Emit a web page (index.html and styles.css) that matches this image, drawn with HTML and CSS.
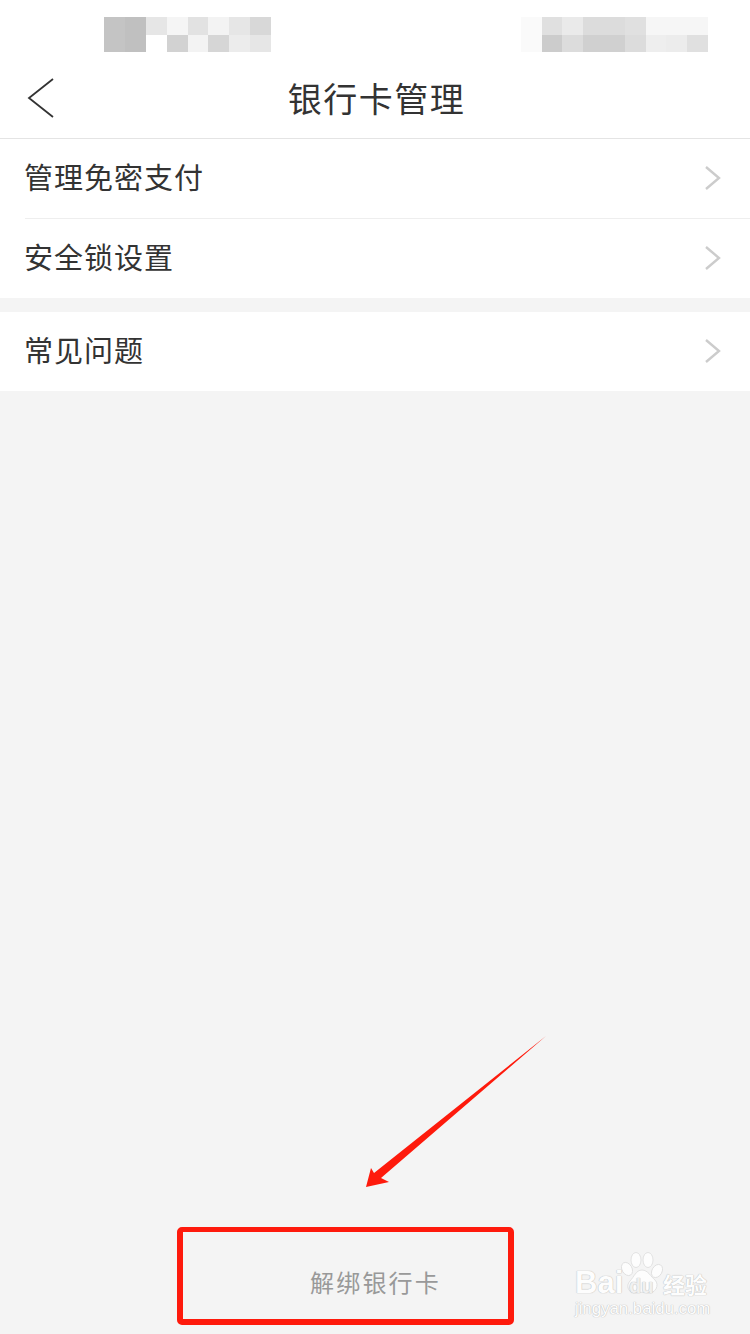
FILE: index.html
```html
<!DOCTYPE html>
<html lang="zh-CN">
<head>
    <meta charset="UTF-8">
    <meta name="viewport" content="width=device-width, initial-scale=1.0">
    <title>银行卡管理</title>
    <link rel="stylesheet" href="styles.css">
</head>
<body>
    <div class="page">
        <div class="status-bar">
            <div class="mosaic mosaic-left">
                <i class="c4"></i><i class="c0"></i><i class="e6"></i><i class="f5"></i><i class="e2"></i><i class="f3"></i><i class="e6"></i><i class="d8"></i>
                <i class="c4"></i><i class="c0"></i><i class="ff"></i><i class="d2"></i><i class="f3"></i><i class="d6"></i><i class="ec"></i><i class="e6"></i>
            </div>
            <div class="mosaic mosaic-right">
                <i class="fa"></i><i class="e0"></i><i class="ea"></i><i class="dc"></i><i class="dc"></i><i class="e0"></i><i class="f6"></i><i class="f6"></i><i class="f6"></i>
                <i class="fa"></i><i class="cc"></i><i class="dc"></i><i class="d0"></i><i class="d0"></i><i class="dc"></i><i class="ee"></i><i class="ec"></i><i class="e0"></i>
            </div>
        </div>

        <div class="nav-bar">
            <svg class="back" width="30" height="42" viewBox="0 0 30 42"><path d="M27 2 L3 21 L27 40" fill="none" stroke="#333" stroke-width="1.8"/></svg>
            <h1 class="nav-title">银行卡管理</h1>
        </div>

        <div class="group">
            <div class="row row-line">
                <span class="row-label">管理免密支付</span>
                <svg class="arrow" width="18" height="26" viewBox="0 0 18 26"><path d="M2 2 L15 13 L2 24" fill="none" stroke="#ccc" stroke-width="2.4"/></svg>
            </div>
            <div class="row">
                <span class="row-label">安全锁设置</span>
                <svg class="arrow" width="18" height="26" viewBox="0 0 18 26"><path d="M2 2 L15 13 L2 24" fill="none" stroke="#ccc" stroke-width="2.4"/></svg>
            </div>
        </div>

        <div class="group">
            <div class="row">
                <span class="row-label">常见问题</span>
                <svg class="arrow" width="18" height="26" viewBox="0 0 18 26"><path d="M2 2 L15 13 L2 24" fill="none" stroke="#ccc" stroke-width="2.4"/></svg>
            </div>
        </div>

        <div class="unbind">解绑银行卡</div>
    </div>

    <!-- annotations on top of the screenshot -->
    <svg class="pointer" width="190" height="160" viewBox="0 0 190 160">
        <path d="M186 0 L21 142 L29 146 L6 151 L11 132 L14 137 Z" fill="#fe1a0c"/>
    </svg>
    <div class="highlight"></div>

    <div class="watermark">
        <svg class="paw" width="44" height="44" viewBox="0 0 44 44">
            <g fill="#fdfdfd" stroke="#dcdcdc" stroke-width="0.8">
                <ellipse cx="7" cy="17" rx="5" ry="7" transform="rotate(-30 7 17)"/>
                <ellipse cx="16" cy="8" rx="5" ry="7.5"/>
                <ellipse cx="28" cy="8" rx="5" ry="7.5"/>
                <ellipse cx="37" cy="19" rx="5" ry="7" transform="rotate(30 37 19)"/>
                <path d="M22 18 C28 18 31 25 35 28 C40 33 35 42 28 41 C24 40 20 40 16 41 C9 42 5 34 10 29 C14 25 16 18 22 18 Z"/>
            </g>
        </svg>
        <span class="wm-bai">Bai</span>
        <span class="wm-du">du</span>
        <span class="wm-jy">经验</span>
        <span class="wm-url">jingyan.baidu.com</span>
    </div>
</body>
</html>
```

FILE: styles.css
```css
body {
    margin: 0;
    background-color: #f4f4f4;
    font-family: "Noto Sans CJK SC", "Liberation Sans", sans-serif;
    color: #333;
}

.page {
    display: flex;
    flex-direction: column;
    height: 1334px;
    overflow: hidden;
}

.status-bar {
    display: flex;
    justify-content: space-between;
    height: 69px;
    box-sizing: border-box;
    padding: 17px 42px 0 104px;
    background-color: #fff;
}

.mosaic {
    display: grid;
    grid-auto-rows: 17.5px;
    height: 35px;
}

.mosaic-left {
    grid-template-columns: repeat(8, 20.9px);
}

.mosaic-right {
    grid-template-columns: repeat(9, 20.8px);
}

.c0 { background-color: #c0c0c0; }
.c4 { background-color: #c4c4c4; }
.cc { background-color: #cccccc; }
.d0 { background-color: #d0d0d0; }
.d2 { background-color: #d2d2d2; }
.d6 { background-color: #d6d6d6; }
.d8 { background-color: #d8d8d8; }
.dc { background-color: #dcdcdc; }
.e0 { background-color: #e0e0e0; }
.e2 { background-color: #e2e2e2; }
.e6 { background-color: #e6e6e6; }
.ea { background-color: #eaeaea; }
.ec { background-color: #ececec; }
.ee { background-color: #eeeeee; }
.f3 { background-color: #f3f3f3; }
.f5 { background-color: #f5f5f5; }
.f6 { background-color: #f6f6f6; }
.fa { background-color: #fafafa; }
.ff { background-color: #ffffff; }

.nav-bar {
    display: flex;
    align-items: center;
    justify-content: center;
    height: 70px;
    box-sizing: border-box;
    padding-bottom: 12px;
    background-color: #fff;
    border-bottom: 1px solid #e4e4e4;
    position: relative;
}

.back {
    position: absolute;
    left: 26px;
    top: 8px;
}

.nav-title {
    margin: 0;
    padding-left: 3px;
    font-size: 34px;
    font-weight: 400;
    letter-spacing: 1.5px;
    line-height: 56px;
}

.group {
    background-color: #fff;
    margin-bottom: 14px;
}

.row {
    display: flex;
    align-items: center;
    justify-content: space-between;
    height: 79px;
    margin-left: 25px;
    padding-right: 28px;
    font-size: 29px;
    letter-spacing: 1px;
}

.row-line {
    height: 80px;
    box-sizing: border-box;
    border-bottom: 1px solid #eeeeee;
}

.row-label {
    margin-left: -1px;
    padding-bottom: 6px;
}

.arrow {
    margin-bottom: 2px;
}

.unbind {
    margin-top: auto;
    height: 98px;
    line-height: 102px;
    padding-bottom: 5px;
    padding-left: 1px;
    text-align: center;
    font-size: 24px;
    letter-spacing: 2.2px;
    color: #999;
}

.pointer {
    position: absolute;
    left: 360px;
    top: 1036px;
}

.highlight {
    position: absolute;
    left: 177px;
    top: 1227px;
    width: 325px;
    height: 87px;
    border: 6px solid #fe1a0c;
    border-top-width: 5px;
    border-radius: 5px;
}

.watermark {
    position: absolute;
    left: 570px;
    top: 1250px;
    width: 150px;
    height: 70px;
    color: #fdfdfd;
    font-family: "Liberation Sans", sans-serif;
    text-shadow: 0 0 1px #bdbdbd, 0 0 1px #bdbdbd;
}

.watermark span {
    position: absolute;
    white-space: nowrap;
}

.paw {
    position: absolute;
    left: 50px;
    top: 2px;
}

.wm-bai {
    left: 5px;
    top: 20px;
    font-size: 31px;
    font-weight: 700;
    line-height: 26px;
}

.wm-du {
    left: 59px;
    top: 25px;
    font-size: 20px;
    font-weight: 700;
    line-height: 22px;
    color: #f0f0f0;
}

.wm-jy {
    left: 93px;
    top: 22px;
    font-family: "Noto Sans CJK SC", sans-serif;
    font-size: 22px;
    font-weight: 700;
    line-height: 23px;
}

.wm-url {
    left: 5px;
    top: 50px;
    font-size: 17px;
    letter-spacing: -0.1px;
    line-height: 18px;
}
```
